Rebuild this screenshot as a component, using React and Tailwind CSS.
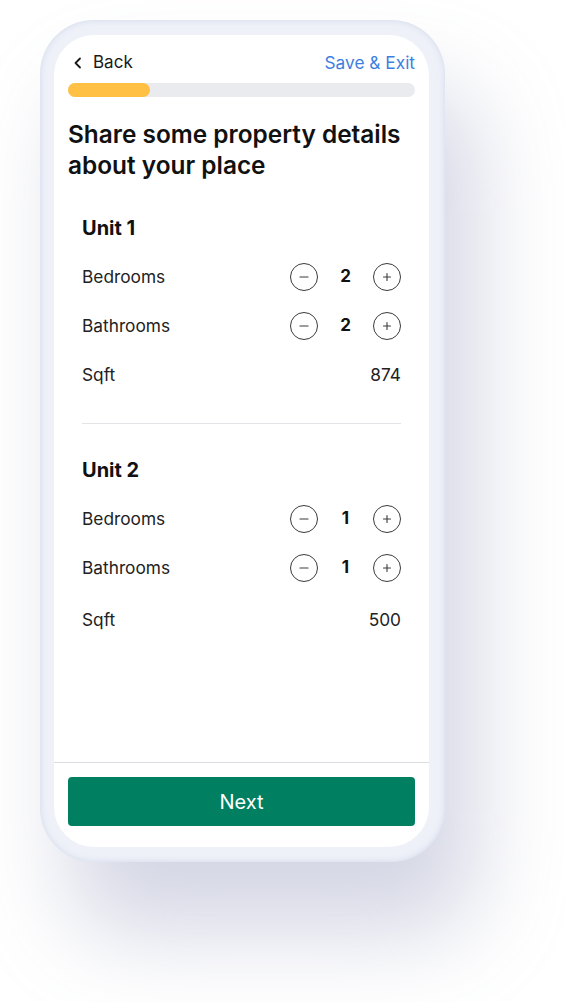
import React, { useState } from 'react';

const Stepper = ({ value, onChange }) => (
  <div className="flex items-center">
    <button
      type="button"
      onClick={() => onChange(Math.max(0, value - 1))}
      className="flex h-[28px] w-[28px] items-center justify-center rounded-full border border-[#3a3a3a]"
    >
      <svg width="10" height="10" viewBox="0 0 10 10">
        <path d="M1 5h8" stroke="#3a3a3a" strokeWidth="1.2" strokeLinecap="round" />
      </svg>
    </button>
    <span className="w-[55px] text-center text-[17px] font-bold text-[#111]">{value}</span>
    <button
      type="button"
      onClick={() => onChange(value + 1)}
      className="flex h-[28px] w-[28px] items-center justify-center rounded-full border border-[#3a3a3a]"
    >
      <svg width="10" height="10" viewBox="0 0 10 10">
        <path d="M1.5 5h7M5 1.5v7" stroke="#3a3a3a" strokeWidth="1.1" strokeLinecap="round" />
      </svg>
    </button>
  </div>
);

const Unit = ({ name, unit, setUnit, sqftRow }) => (
  <div>
    <h3 className="h-[28px] text-[20px] font-bold leading-[28px] text-[#111]">{name}</h3>
    <div className="mt-[10px]">
      <div className="flex h-[49px] items-center justify-between">
        <span className="text-[17.3px] text-[#222]">Bedrooms</span>
        <Stepper value={unit.beds} onChange={(v) => setUnit({ ...unit, beds: v })} />
      </div>
      <div className="flex h-[49px] items-center justify-between">
        <span className="text-[17.3px] text-[#222]">Bathrooms</span>
        <Stepper value={unit.baths} onChange={(v) => setUnit({ ...unit, baths: v })} />
      </div>
      <div className={`flex items-center justify-between ${sqftRow}`}>
        <span className="text-[17.3px] text-[#222]">Sqft</span>
        <span className="text-[17.3px] text-[#222]">{unit.sqft}</span>
      </div>
    </div>
  </div>
);

export default function App() {
  const [unit1, setUnit1] = useState({ beds: 2, baths: 2, sqft: 874 });
  const [unit2, setUnit2] = useState({ beds: 1, baths: 1, sqft: 500 });

  return (
    <div
      className="h-[1002px] w-[565px] overflow-hidden bg-white pl-[40px] pt-[20px]"
      style={{ fontFamily: 'Inter, "Noto Sans", sans-serif' }}
    >
      <div className="h-[842px] w-[405px] rounded-[54px] bg-[#eef1f8] pl-[14px] pt-[15px] shadow-[30px_70px_90px_rgba(160,165,195,0.45),inset_0_0_6px_rgba(190,200,225,0.6)]">
        <div className="flex h-[812px] w-[375px] flex-col overflow-hidden rounded-[40px] bg-white">
          <div className="flex-1 px-[14px] pt-[16px]">
            <div className="flex h-[24px] items-center justify-between">
              <button type="button" className="flex items-center text-[17px] text-[#1a1a1a]">
                <svg width="14" height="14" viewBox="0 0 14 14" className="ml-[3px] mr-[8px]">
                  <path d="M9 2.5L4.5 7L9 11.5" fill="none" stroke="#1a1a1a" strokeWidth="1.8" strokeLinecap="round" strokeLinejoin="round" />
                </svg>
                Back
              </button>
              <button type="button" className="text-[17.3px] text-[#3d7fe0]">Save &amp; Exit</button>
            </div>
            <div className="mt-[8px] h-[14px] w-full rounded-full bg-[#eaebef]">
              <div className="h-[14px] w-[82px] rounded-full bg-[#ffc043]" />
            </div>
            <h1 className="mt-[22px] text-[24.4px] font-semibold leading-[31px] text-[#111]">
              Share some property details about your place
            </h1>
            <div className="mt-[33px] px-[14px]">
              <Unit name="Unit 1" unit={unit1} setUnit={setUnit1} sqftRow="h-[49px]" />
              <div className="mt-[24px] h-px bg-[#e3e4e8]" />
              <div className="mt-[32px]">
                <Unit name="Unit 2" unit={unit2} setUnit={setUnit2} sqftRow="mt-[3px] h-[49px]" />
              </div>
            </div>
          </div>
          <div className="border-t border-[#dcdde2] px-[14px] pb-[21px] pt-[14px]">
            <button type="button" className="h-[49px] w-full rounded-[4px] bg-[#008060] text-[20px] font-normal text-white">
              Next
            </button>
          </div>
        </div>
      </div>
    </div>
  );
}
